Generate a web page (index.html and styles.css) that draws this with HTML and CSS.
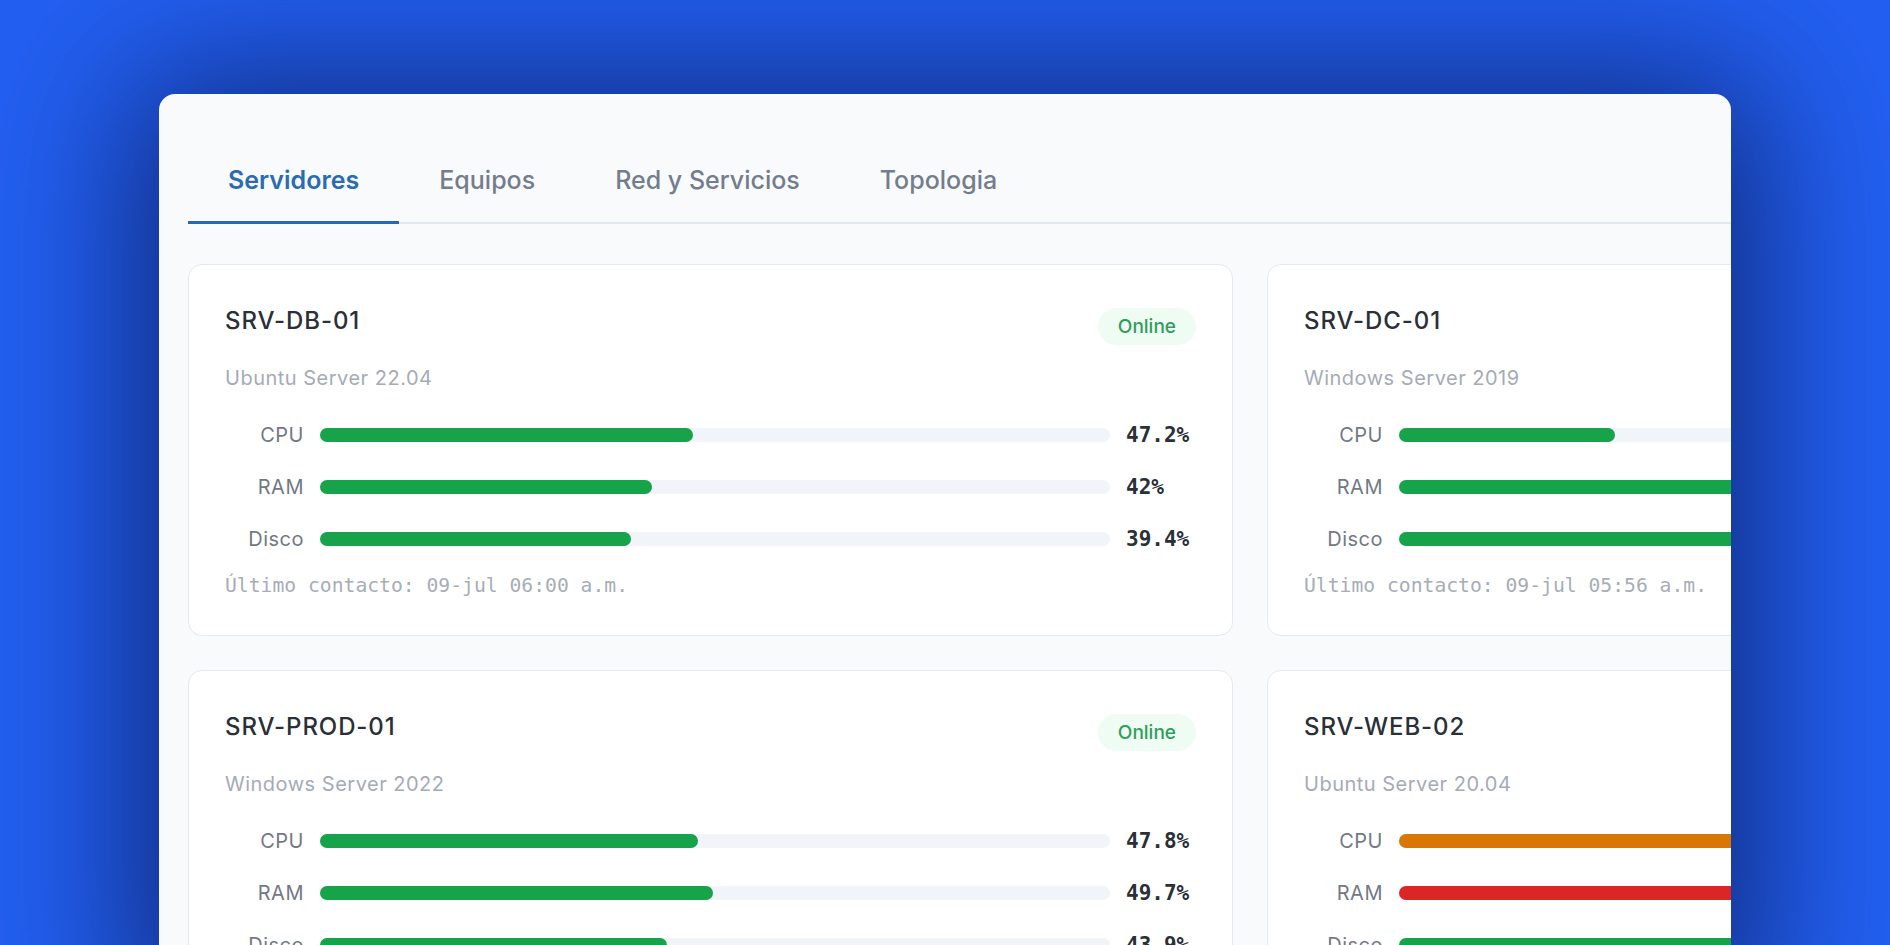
FILE: index.html
```html
<!DOCTYPE html>
<html>
<head>
    <title>Monitor de Infraestructura</title>
    <link rel="stylesheet" href="styles.css">
</head>
<body>
    <div class="window">
        <nav class="tabs">
            <a class="tab active">Servidores</a>
            <a class="tab">Equipos</a>
            <a class="tab">Red y Servicios</a>
            <a class="tab">Topologia</a>
        </nav>

        <div class="server-grid">
            <div class="card">
                <div class="card-head">
                    <span class="server-name">SRV-DB-01</span>
                    <span class="badge online">Online</span>
                </div>
                <div class="server-os">Ubuntu Server 22.04</div>
                <div class="metrics">
                    <div class="metric">
                        <span class="metric-label">CPU</span>
                        <div class="track"><div class="fill" style="width: 47.2%"></div></div>
                        <span class="metric-value">47.2%</span>
                    </div>
                    <div class="metric">
                        <span class="metric-label">RAM</span>
                        <div class="track"><div class="fill" style="width: 42%"></div></div>
                        <span class="metric-value">42%</span>
                    </div>
                    <div class="metric">
                        <span class="metric-label">Disco</span>
                        <div class="track"><div class="fill" style="width: 39.4%"></div></div>
                        <span class="metric-value">39.4%</span>
                    </div>
                </div>
                <div class="last-seen">Último contacto: 09-jul 06:00 a.m.</div>
            </div>

            <div class="card">
                <div class="card-head">
                    <span class="server-name">SRV-DC-01</span>
                    <span class="badge online">Online</span>
                </div>
                <div class="server-os">Windows Server 2019</div>
                <div class="metrics">
                    <div class="metric">
                        <span class="metric-label">CPU</span>
                        <div class="track"><div class="fill" style="width: 27.3%"></div></div>
                        <span class="metric-value">27.3%</span>
                    </div>
                    <div class="metric">
                        <span class="metric-label">RAM</span>
                        <div class="track"><div class="fill" style="width: 68.5%"></div></div>
                        <span class="metric-value">68.5%</span>
                    </div>
                    <div class="metric">
                        <span class="metric-label">Disco</span>
                        <div class="track"><div class="fill" style="width: 61.2%"></div></div>
                        <span class="metric-value">61.2%</span>
                    </div>
                </div>
                <div class="last-seen">Último contacto: 09-jul 05:56 a.m.</div>
            </div>

            <div class="card">
                <div class="card-head">
                    <span class="server-name">SRV-PROD-01</span>
                    <span class="badge online">Online</span>
                </div>
                <div class="server-os">Windows Server 2022</div>
                <div class="metrics">
                    <div class="metric">
                        <span class="metric-label">CPU</span>
                        <div class="track"><div class="fill" style="width: 47.8%"></div></div>
                        <span class="metric-value">47.8%</span>
                    </div>
                    <div class="metric">
                        <span class="metric-label">RAM</span>
                        <div class="track"><div class="fill" style="width: 49.7%"></div></div>
                        <span class="metric-value">49.7%</span>
                    </div>
                    <div class="metric">
                        <span class="metric-label">Disco</span>
                        <div class="track"><div class="fill" style="width: 43.9%"></div></div>
                        <span class="metric-value">43.9%</span>
                    </div>
                </div>
                <div class="last-seen">Último contacto: 09-jul 06:00 a.m.</div>
            </div>

            <div class="card">
                <div class="card-head">
                    <span class="server-name">SRV-WEB-02</span>
                    <span class="badge warning">Alerta</span>
                </div>
                <div class="server-os">Ubuntu Server 20.04</div>
                <div class="metrics">
                    <div class="metric">
                        <span class="metric-label">CPU</span>
                        <div class="track"><div class="fill warn" style="width: 78.4%"></div></div>
                        <span class="metric-value">78.4%</span>
                    </div>
                    <div class="metric">
                        <span class="metric-label">RAM</span>
                        <div class="track"><div class="fill crit" style="width: 91.6%"></div></div>
                        <span class="metric-value">91.6%</span>
                    </div>
                    <div class="metric">
                        <span class="metric-label">Disco</span>
                        <div class="track"><div class="fill" style="width: 58.3%"></div></div>
                        <span class="metric-value">58.3%</span>
                    </div>
                </div>
                <div class="last-seen">Último contacto: 09-jul 05:58 a.m.</div>
            </div>
        </div>
    </div>
</body>
</html>
```

FILE: styles.css
```css
body {
    margin: 0;
    height: 945px;
    overflow: hidden;
    background: #2360f2;
    font-family: Inter, "Noto Sans", sans-serif;
}
.window {
    margin: 94px 0 0 159px;
    width: 1572px;
    height: 900px;
    padding-left: 29px;
    box-sizing: border-box;
    background-color: #f8fafc;
    border-radius: 16px 16px 0 0;
    overflow: hidden;
    box-shadow: 0 10px 150px 30px rgba(12, 30, 95, 0.78);
}
.tabs {
    display: flex;
    padding-top: 45px;
    border-bottom: 2px solid #e2e8f0;
}
.tab {
    padding: 26px 40px;
    margin-bottom: -2px;
    font-size: 25px;
    line-height: 30px;
    font-weight: 500;
    color: #737d8c;
    border-bottom: 3px solid transparent;
    cursor: pointer;
}
.tab.active {
    font-weight: 600;
    color: #2b6cb0;
    border-bottom-color: #1f6cb0;
}
.server-grid {
    display: grid;
    grid-template-columns: repeat(2, 1045px);
    gap: 34px;
    margin-top: 40px;
}
.card {
    background-color: #fff;
    border: 1px solid #e5e9f0;
    border-radius: 14px;
    padding: 38px 36px 37px;
}
.card-head {
    display: flex;
    justify-content: space-between;
    align-items: flex-start;
}
.server-name {
    font-size: 24px;
    line-height: 36px;
    font-weight: 500;
    letter-spacing: 0.9px;
    color: #2b2f37;
}
.badge {
    margin-top: 5px;
    height: 37px;
    line-height: 37px;
    padding: 0 20px;
    border-radius: 19px;
    font-size: 19px;
    font-weight: 500;
}
.badge.online {
    color: #2f9e5b;
    background-color: #effcf3;
}
.badge.warning {
    color: #c26a06;
    background-color: #fff7e6;
}
.server-os {
    margin-top: 20px;
    font-size: 20px;
    line-height: 26px;
    letter-spacing: 0.5px;
    color: #a5abb5;
}
.metrics {
    display: grid;
    gap: 22px;
    margin-top: 29px;
}
.metric {
    display: grid;
    grid-template-columns: 79px 1fr 70px;
    column-gap: 16px;
    align-items: center;
    height: 30px;
}
.metric-label {
    text-align: right;
    font-size: 20px;
    letter-spacing: 0.5px;
    color: #727985;
}
.track {
    height: 14px;
    border-radius: 7px;
    background-color: #f1f4f8;
}
.fill {
    height: 100%;
    border-radius: 7px;
    background-color: #16a34a;
}
.fill.warn {
    background-color: #d97706;
}
.fill.crit {
    background-color: #dc2626;
}
.metric-value {
    font-family: "DejaVu Sans Mono", "Liberation Mono", monospace;
    font-size: 21px;
    font-weight: 700;
    color: #2b2f37;
}
.last-seen {
    margin-top: 20px;
    font-family: "DejaVu Sans Mono", "Liberation Mono", monospace;
    font-size: 19.7px;
    line-height: 24px;
    color: #a7adb7;
}
```
